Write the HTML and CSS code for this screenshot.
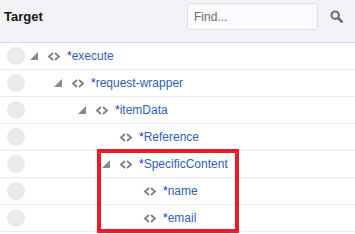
FILE: index.html
```html
<!DOCTYPE html>
<html>
<head>
<meta charset="utf-8">
<link rel="stylesheet" href="styles.css">
</head>
<body>
<div class="panel">
  <div class="header">
    <div class="title">Target</div>
    <input class="find" type="text" placeholder="Find...">
    <svg class="search" width="13" height="13" viewBox="0 0 13 13"><circle cx="5.2" cy="5.2" r="3.7" fill="none" stroke="#727272" stroke-width="2.2"/><line x1="8" y1="8" x2="11.6" y2="11.6" stroke="#727272" stroke-width="2.8" stroke-linecap="round"/></svg>
  </div>
  <div class="tree">
    <div class="row">
      <span class="dot"></span><span class="indent l0"></span>
      <span class="toggle"><svg width="8" height="8" viewBox="0 0 8 8"><polygon points="8,0 8,8 0,8" fill="#8a8a8a"/></svg></span>
      <svg class="tag" width="14" height="9" viewBox="0 0 14 9"><path d="M6 1 L2 4.5 L6 8 M8 1 L12 4.5 L8 8" fill="none" stroke="#7f7f7f" stroke-width="1.8"/></svg>
      <span class="label"><span class="star">*</span>execute</span>
    </div>
    <div class="row">
      <span class="dot"></span><span class="indent l1"></span>
      <span class="toggle"><svg width="8" height="8" viewBox="0 0 8 8"><polygon points="8,0 8,8 0,8" fill="#8a8a8a"/></svg></span>
      <svg class="tag" width="14" height="9" viewBox="0 0 14 9"><path d="M6 1 L2 4.5 L6 8 M8 1 L12 4.5 L8 8" fill="none" stroke="#7f7f7f" stroke-width="1.8"/></svg>
      <span class="label"><span class="star">*</span>request-wrapper</span>
    </div>
    <div class="row">
      <span class="dot"></span><span class="indent l2"></span>
      <span class="toggle"><svg width="8" height="8" viewBox="0 0 8 8"><polygon points="8,0 8,8 0,8" fill="#8a8a8a"/></svg></span>
      <svg class="tag" width="14" height="9" viewBox="0 0 14 9"><path d="M6 1 L2 4.5 L6 8 M8 1 L12 4.5 L8 8" fill="none" stroke="#7f7f7f" stroke-width="1.8"/></svg>
      <span class="label"><span class="star">*</span>itemData</span>
    </div>
    <div class="row">
      <span class="dot"></span><span class="indent l3"></span>
      <span class="toggle"></span>
      <svg class="tag" width="14" height="9" viewBox="0 0 14 9"><path d="M6 1 L2 4.5 L6 8 M8 1 L12 4.5 L8 8" fill="none" stroke="#7f7f7f" stroke-width="1.8"/></svg>
      <span class="label"><span class="star">*</span>Reference</span>
    </div>
    <div class="row">
      <span class="dot"></span><span class="indent l3"></span>
      <span class="toggle"><svg width="8" height="8" viewBox="0 0 8 8"><polygon points="8,0 8,8 0,8" fill="#8a8a8a"/></svg></span>
      <svg class="tag" width="14" height="9" viewBox="0 0 14 9"><path d="M6 1 L2 4.5 L6 8 M8 1 L12 4.5 L8 8" fill="none" stroke="#7f7f7f" stroke-width="1.8"/></svg>
      <span class="label"><span class="star">*</span>SpecificContent</span>
    </div>
    <div class="row">
      <span class="dot"></span><span class="indent l4"></span>
      <span class="toggle"></span>
      <svg class="tag" width="14" height="9" viewBox="0 0 14 9"><path d="M6 1 L2 4.5 L6 8 M8 1 L12 4.5 L8 8" fill="none" stroke="#7f7f7f" stroke-width="1.8"/></svg>
      <span class="label"><span class="star">*</span>name</span>
    </div>
    <div class="row">
      <span class="dot"></span><span class="indent l4"></span>
      <span class="toggle"></span>
      <svg class="tag" width="14" height="9" viewBox="0 0 14 9"><path d="M6 1 L2 4.5 L6 8 M8 1 L12 4.5 L8 8" fill="none" stroke="#7f7f7f" stroke-width="1.8"/></svg>
      <span class="label"><span class="star">*</span>email</span>
    </div>
    <div class="highlight"></div>
  </div>
</div>
</body>
</html>
```
FILE: styles.css
```css
* { box-sizing: border-box; }
html, body { margin: 0; padding: 0; background: #ffffff; }
body { font-family: "Liberation Sans", Arial, sans-serif; width: 355px; height: 234px; overflow: hidden; }
.panel { width: 355px; }
.header {
  height: 43px;
  background: #f2f3f7;
  border-bottom: 1px solid #d5dae0;
  display: flex;
  align-items: flex-start;
  padding: 3px 12px 0 4px;
}
.title {
  font-weight: bold;
  font-size: 13px;
  line-height: 27px;
  color: #161616;
}
.find {
  margin-left: auto;
  width: 131px;
  height: 27px;
  border: 1px solid #dde1e6;
  border-radius: 2px;
  background: #fafbfd;
  font-family: "Liberation Sans", Arial, sans-serif;
  font-size: 12px;
  padding: 0 0 0 6px;
  outline: none;
}
.find::placeholder { color: #6a6a6a; }
.search { margin: 7px 0 0 12px; display: block; }
.tree { position: relative; }
.row {
  height: 27px;
  border-bottom: 1px solid #e9ebee;
  display: flex;
  align-items: center;
}
.dot {
  width: 18px;
  height: 18px;
  border-radius: 50%;
  background: #e7ebeb;
  margin-left: 7px;
  flex: none;
}
.indent { flex: none; }
.l0 { width: 0; }
.l1 { width: 24px; }
.l2 { width: 48px; }
.l3 { width: 72px; }
.l4 { width: 96px; }
.toggle {
  width: 22px;
  padding-left: 5px;
  height: 8px;
  flex: none;
  display: flex;
}
.toggle svg { display: block; }
.tag { display: block; flex: none; margin-right: 6px; }
.label {
  font-size: 12px;
  color: #2f5fb3;
  white-space: nowrap;
}
.star { color: #1b1bf5; }
.highlight {
  position: absolute;
  left: 97px;
  top: 106px;
  width: 142px;
  height: 84px;
  border: 4px solid #ed1c24;
}
```
